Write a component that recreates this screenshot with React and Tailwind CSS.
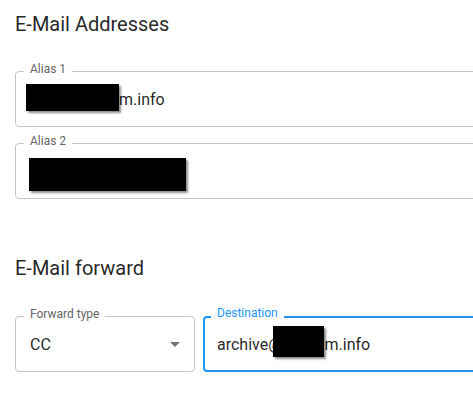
import React from "react";

function Field({ label, focused, className = "", children }) {
  return (
    <div
      className={
        "relative h-[56px] rounded-[4px] flex items-center px-[14px] " +
        (focused
          ? "outline outline-2 outline-offset-[-2px] outline-[#2196f3] "
          : "border border-[#c4c4c4] ") +
        className
      }
    >
      <span
        className={
          "absolute top-[-9px] left-[8px] px-[6px] bg-white text-[12px] leading-[12px] whitespace-nowrap " +
          (focused ? "text-[#2196f3]" : "text-[#666666]")
        }
      >
        {label}
      </span>
      {children}
    </div>
  );
}

function Redact({ className }) {
  return (
    <span
      className={
        "absolute bg-black shadow-[2px_2px_2px_rgba(0,0,0,0.45)] " + className
      }
    />
  );
}

export default function App() {
  return (
    <div
      className="w-[473px] h-[401px] overflow-hidden bg-white pl-[15px] pt-[8px] text-[rgba(0,0,0,0.87)]"
      style={{ fontFamily: "Roboto, 'Liberation Sans', sans-serif" }}
    >
      <h2 className="text-[20px] leading-[32px] font-normal">E-Mail Addresses</h2>

      <div className="mt-[31px] flex flex-col gap-[16px] w-[600px]">
        <Field label="Alias 1">
          <span className="text-[16px] leading-[23px] whitespace-nowrap">
            <span className="inline-block w-[89px]" />
            m.info
          </span>
          <Redact className="left-[10px] top-[12px] w-[93px] h-[27px]" />
        </Field>
        <Field label="Alias 2">
          <span className="text-[16px] leading-[23px]">&nbsp;</span>
          <Redact className="left-[13px] top-[14px] w-[157px] h-[33px]" />
        </Field>
      </div>

      <h2 className="mt-[53px] text-[20px] leading-[32px] font-normal">E-Mail forward</h2>

      <div className="mt-[32px] flex gap-[8px]">
        <Field label="Forward type" className="w-[180px] shrink-0">
          <span className="text-[16px] leading-[23px] flex-1">CC</span>
          <svg
            viewBox="0 0 24 24"
            className="absolute right-[7px] top-1/2 -translate-y-1/2 w-[24px] h-[24px]"
            fill="rgba(0,0,0,0.54)"
          >
            <path d="M7 10l5 5 5-5z" />
          </svg>
        </Field>
        <Field label="Destination" focused className="w-[400px] shrink-0">
          <span className="text-[16px] leading-[23px] whitespace-nowrap">
            archive@
            <span className="inline-block w-[42px]" />
            m.info
          </span>
          <Redact className="left-[70px] top-[10px] w-[51px] h-[31px]" />
        </Field>
      </div>
    </div>
  );
}
